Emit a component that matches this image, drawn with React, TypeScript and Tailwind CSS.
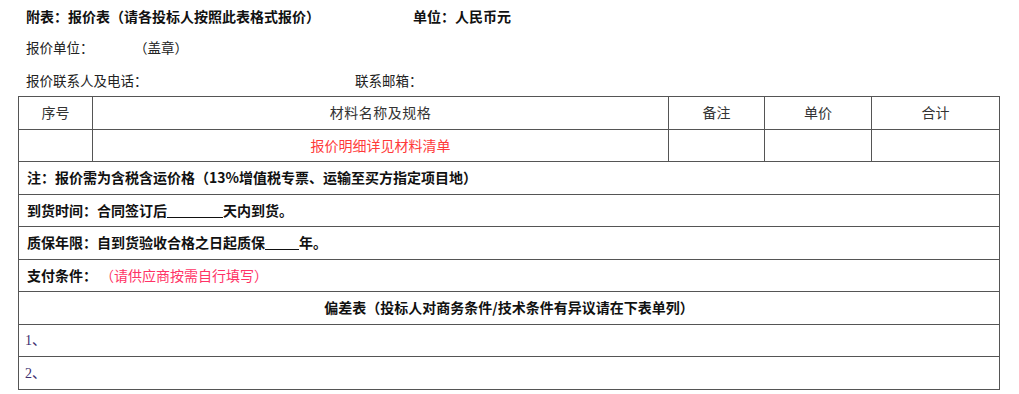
export default function App() {
  const font = { fontFamily: '"Noto Sans CJK SC", "Noto Sans", sans-serif' }
  const cell = 'border border-[#555] h-[32.5px] px-2 text-[14px]'
  const serif = { fontFamily: '"Liberation Serif", "Noto Sans CJK SC", serif' }

  return (
    <div className="min-h-screen bg-white text-[#111]" style={font}>
      <div className="pl-[26px] pt-[5px]">
        <div className="flex h-[22px] items-center text-[14px] font-bold">
          <span className="w-[387px]">附表：报价表（请各投标人按照此表格式报价）</span>
          <span>单位：人民币元</span>
        </div>
        <div className="mt-[9px] flex h-[22px] items-center text-[13.5px] text-[#222]">
          <span className="w-[108px]">报价单位：</span>
          <span>（盖章）</span>
        </div>
        <div className="mt-[11px] flex h-[22px] items-center text-[13.5px] text-[#222]">
          <span className="w-[329px]">报价联系人及电话：</span>
          <span>联系邮箱：</span>
        </div>
      </div>

      <table className="ml-[18px] mt-[5px] w-[981px] table-fixed border-collapse">
        <colgroup>
          <col className="w-[74px]" />
          <col className="w-[576px]" />
          <col className="w-[96px]" />
          <col className="w-[107px]" />
          <col className="w-[128px]" />
        </colgroup>
        <tbody>
          <tr className="text-center text-[#333]">
            <td className={`${cell} text-[13.5px]`}>序号</td>
            <td className={`${cell} text-[13.5px] tracking-[0.5px]`}>材料名称及规格</td>
            <td className={`${cell} text-[13.5px]`}>备注</td>
            <td className={`${cell} text-[13.5px]`}>单价</td>
            <td className={`${cell} text-[13.5px]`}>合计</td>
          </tr>
          <tr className="text-center">
            <td className={cell}></td>
            <td className={`${cell} text-[#ff3a3a]`}>报价明细详见材料清单</td>
            <td className={cell}></td>
            <td className={cell}></td>
            <td className={cell}></td>
          </tr>
          <tr>
            <td colSpan={5} className={`${cell} font-bold`}>
              注：报价需为含税含运价格（13%增值税专票、运输至买方指定项目地）
            </td>
          </tr>
          <tr>
            <td colSpan={5} className={`${cell} font-bold`}>
              到货时间：合同签订后
              <span className="inline-block w-[56px] border-b border-[#111] align-[-2px]"></span>
              天内到货。
            </td>
          </tr>
          <tr>
            <td colSpan={5} className={`${cell} font-bold`}>
              质保年限：自到货验收合格之日起质保
              <span className="inline-block w-[34px] border-b border-[#111] align-[-2px]"></span>
              年。
            </td>
          </tr>
          <tr>
            <td colSpan={5} className={cell}>
              <span className="font-bold">支付条件：</span>
              <span className="ml-[10px] text-[#ff3366]">（请供应商按需自行填写）</span>
            </td>
          </tr>
          <tr>
            <td colSpan={5} className={`${cell} text-center font-bold`}>
              偏差表（投标人对商务条件/技术条件有异议请在下表单列）
            </td>
          </tr>
          <tr>
            <td colSpan={5} className={`${cell} pl-[6px] text-[#3d2f70]`}>
              <span style={serif}>1</span>、
            </td>
          </tr>
          <tr>
            <td colSpan={5} className={`${cell} pl-[6px] text-[#3d2f70]`}>
              <span style={serif}>2</span>、
            </td>
          </tr>
        </tbody>
      </table>
    </div>
  )
}
